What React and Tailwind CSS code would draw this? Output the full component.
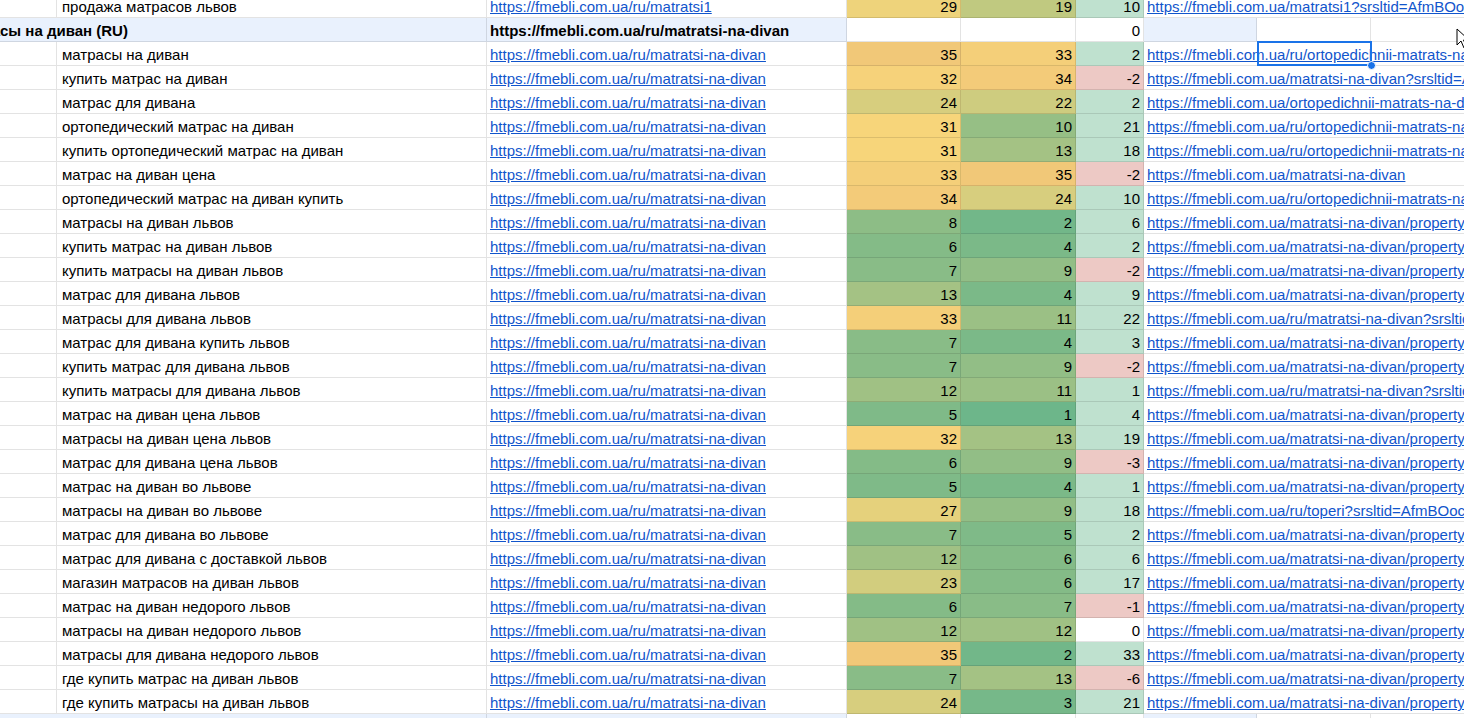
import React from 'react';

const PAGE = 'https://fmebli.com.ua/ru/matratsi-na-divan';
const PROP = 'https://fmebli.com.ua/matratsi-na-divan/property-razmer-80x190-ili-90x200';
const ORTO_RU = 'https://fmebli.com.ua/ru/ortopedichnii-matrats-na-divan-fmebli';
const SRS = 'https://fmebli.com.ua/matratsi-na-divan?srsltid=AfmBOoqZx3';

// keyword, position before, position now, ranking url
const rows = [
    ['матрасы на диван', 35, 33, ORTO_RU],
    ['купить матрас на диван', 32, 34, SRS],
    ['матрас для дивана', 24, 22, 'https://fmebli.com.ua/ortopedichnii-matrats-na-divan-fmebli'],
    ['ортопедический матрас на диван', 31, 10, ORTO_RU],
    ['купить ортопедический матрас на диван', 31, 13, ORTO_RU],
    ['матрас на диван цена', 33, 35, 'https://fmebli.com.ua/matratsi-na-divan'],
    ['ортопедический матрас на диван купить', 34, 24, ORTO_RU],
    ['матрасы на диван львов', 8, 2, PROP],
    ['купить матрас на диван львов', 6, 4, PROP],
    ['купить матрасы на диван львов', 7, 9, PROP],
    ['матрас для дивана львов', 13, 4, PROP],
    ['матрасы для дивана львов', 33, 11, 'https://fmebli.com.ua/ru/matratsi-na-divan?srsltid=AfmBOoqZx3'],
    ['матрас для дивана купить львов', 7, 4, PROP],
    ['купить матрас для дивана львов', 7, 9, PROP],
    ['купить матрасы для дивана львов', 12, 11, 'https://fmebli.com.ua/ru/matratsi-na-divan?srsltid=AfmBOoqZx3'],
    ['матрас на диван цена львов', 5, 1, PROP],
    ['матрасы на диван цена львов', 32, 13, PROP],
    ['матрас для дивана цена львов', 6, 9, PROP],
    ['матрас на диван во львове', 5, 4, PROP],
    ['матрасы на диван во львове', 27, 9, 'https://fmebli.com.ua/ru/toperi?srsltid=AfmBOocK2x'],
    ['матрас для дивана во львове', 7, 5, PROP],
    ['матрас для дивана с доставкой львов', 12, 6, PROP],
    ['магазин матрасов на диван львов', 23, 6, PROP],
    ['матрас на диван недорого львов', 6, 7, PROP],
    ['матрасы на диван недорого львов', 12, 12, PROP],
    ['матрасы для дивана недорого львов', 35, 2, PROP],
    ['где купить матрас на диван львов', 7, 13, PROP],
    ['где купить матрасы на диван львов', 24, 3, PROP],
];

// green -> yellow -> orange, like the sheet's colour scale
function scale(v) {
    const stops = [
        [1, [109, 182, 138]],
        [31, [247, 213, 122]],
        [35, [241, 200, 120]],
    ];
    let a = stops[0], b = stops[1];
    if (v > stops[1][0]) { a = stops[1]; b = stops[2]; }
    const t = Math.max(0, Math.min(1, (v - a[0]) / (b[0] - a[0])));
    const c = a[1].map((x, i) => Math.round(x + (b[1][i] - x) * t));
    return `rgb(${c[0]}, ${c[1]}, ${c[2]})`;
}

function diffColor(d) {
    if (d > 0) return '#bfe1cf';
    if (d < 0) return '#edc9c5';
    return '#ffffff';
}

const cell = 'h-6 border-r border-b border-black/[0.11] flex items-end pb-[3px] leading-[15px] overflow-hidden whitespace-nowrap';
const grid = 'grid grid-cols-[57px_430px_360px_114px_115px_68px_1fr]';

function DataRow({ kw, url, before, now, rank }) {
    const diff = before - now;
    return (
        <div className={grid}>
            <div className={cell}></div>
            <div className={`${cell} pl-[5px]`}>{kw}</div>
            <div className={`${cell} pl-[3px]`}>
                <span className="text-[#1155cc] underline">{url}</span>
            </div>
            <div className={`${cell} justify-end pr-[3px]`} style={{ backgroundColor: scale(before) }}>{before}</div>
            <div className={`${cell} justify-end pr-[3px]`} style={{ backgroundColor: scale(now) }}>{now}</div>
            <div className={`${cell} justify-end pr-[3px]`} style={{ backgroundColor: diffColor(diff) }}>{diff}</div>
            <div className={`${cell} border-r-0 pl-[3px]`}>
                <span className="text-[#1155cc] underline">{rank}</span>
            </div>
        </div>
    );
}

function GroupRow({ head, title, url, total }) {
    return (
        <div className={`${grid} font-bold`}>
            <div className={`${cell} col-span-2 bg-[#e9f1fd]`}>
                {/* the start of the title lies in the column scrolled off to the left */}
                <div className="w-0 flex justify-end">
                    <span className="shrink-0">{head}</span>
                </div>
                <span>{title}</span>
            </div>
            <div className={`${cell} bg-[#e9f1fd] pl-[3px]`}>{url}</div>
            <div className={cell}></div>
            <div className={cell}></div>
            <div className={`${cell} justify-end pr-[3px] font-normal`}>{total}</div>
            <div className="h-6 flex">
                <div className="w-[113px] shrink-0 border-r border-b border-black/[0.11] bg-[#e9f1fd]"></div>
                <div className="w-[114px] shrink-0 border-r border-b border-black/[0.11]"></div>
                <div className="flex-1 border-b border-black/[0.11]"></div>
            </div>
        </div>
    );
}

export default function App() {
    return (
        <div
            className="relative w-[1464px] h-[718px] overflow-hidden bg-white text-[15px] text-black"
            style={{ fontFamily: '"Liberation Sans", Arial, sans-serif' }}
        >
            <div className="-mt-[6px]">
                <DataRow
                    kw="продажа матрасов львов"
                    url="https://fmebli.com.ua/ru/matratsi1"
                    before={29}
                    now={19}
                    rank="https://fmebli.com.ua/matratsi1?srsltid=AfmBOocR7vLq"
                />
                <GroupRow head="Матра" title="сы на диван (RU)" url={PAGE} total={0} />
                {rows.map((r, i) => (
                    <DataRow key={i} kw={r[0]} url={PAGE} before={r[1]} now={r[2]} rank={r[3]} />
                ))}
                <GroupRow head="" title="" url="" total="" />
            </div>

            {/* selected cell H3 */}
            <div className="absolute left-[1257px] top-[41px] w-[115px] h-[25px] border-2 border-[#1a73e8] pointer-events-none"></div>
            <div className="absolute left-[1367px] top-[61px] w-[9px] h-[9px] rounded-full bg-[#1a73e8] border border-white"></div>

            {/* mouse pointer */}
            <svg className="absolute left-[1456px] top-[28px]" width="14" height="22" viewBox="0 0 14 22">
                <path d="M1 1 L1 17 L5 13 L8 20 L10.5 19 L7.5 12 L13 12 Z" fill="#fff" stroke="#000" strokeWidth="1" strokeLinejoin="round" />
            </svg>
        </div>
    );
}
